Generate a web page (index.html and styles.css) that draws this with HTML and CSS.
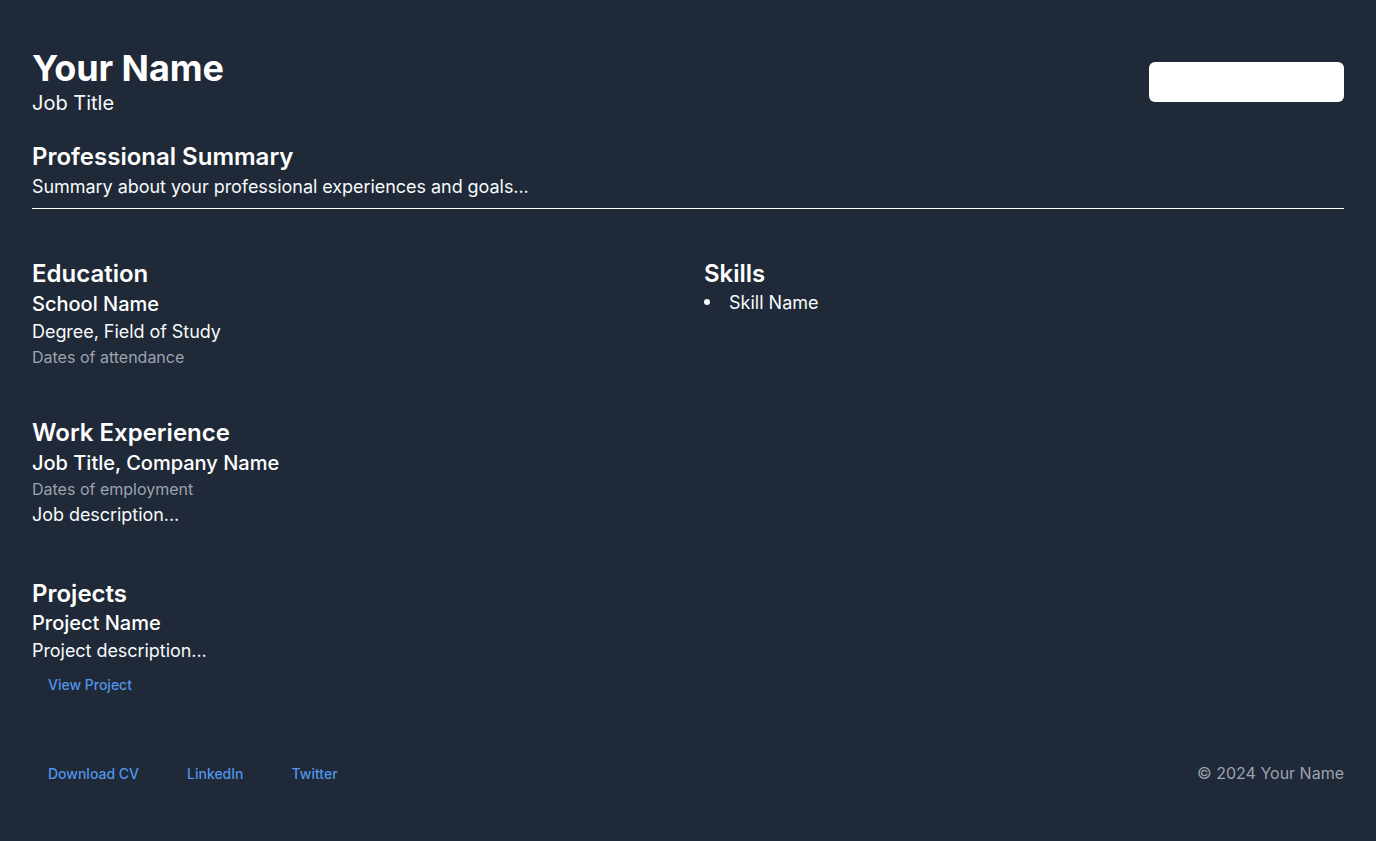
FILE: index.html
```html
<!DOCTYPE html>
<html lang="en">
<head>
<meta charset="utf-8">
<title>Your Name - Resume</title>
<link rel="stylesheet" href="styles.css">
</head>
<body>
<div class="page">
  <header class="top">
    <div class="identity">
      <h1 class="name">Your Name</h1>
      <p class="role">Job Title</p>
    </div>
    <div class="toggle-box"></div>
  </header>

  <section class="summary">
    <h2 class="heading">Professional Summary</h2>
    <p class="text">Summary about your professional experiences and goals...</p>
  </section>
  <hr class="rule">

  <div class="columns">
    <div class="col">
      <section class="block">
        <h2 class="heading">Education</h2>
        <h3 class="sub">School Name</h3>
        <p class="text">Degree, Field of Study</p>
        <p class="muted">Dates of attendance</p>
      </section>
      <section class="block">
        <h2 class="heading">Work Experience</h2>
        <h3 class="sub">Job Title, Company Name</h3>
        <p class="muted">Dates of employment</p>
        <p class="text">Job description...</p>
      </section>
      <section class="block block-projects">
        <h2 class="heading">Projects</h2>
        <h3 class="sub">Project Name</h3>
        <p class="text">Project description...</p>
        <a class="link-btn project-link" href="#">View Project</a>
      </section>
    </div>
    <div class="col">
      <section class="block">
        <h2 class="heading">Skills</h2>
        <ul class="skills">
          <li>Skill Name</li>
        </ul>
      </section>
    </div>
  </div>

  <footer class="foot">
    <nav class="foot-links">
      <a class="link-btn" href="#">Download CV</a>
      <a class="link-btn" href="#">LinkedIn</a>
      <a class="link-btn" href="#">Twitter</a>
    </nav>
    <p class="copy">© 2024 Your Name</p>
  </footer>
</div>
</body>
</html>
```

FILE: styles.css
```css
* { box-sizing: border-box; }

html, body {
  margin: 0;
  padding: 0;
  background: #1f2937;
}

body {
  font-family: Inter, "Noto Sans", "Liberation Sans", sans-serif;
  color: #f7fafc;
  min-height: 841px;
}

.page {
  padding: 47px 32px 36px;
}

h1, h2, h3, p, ul { margin: 0; }

.top {
  display: flex;
  justify-content: space-between;
  align-items: center;
}

.name {
  font-size: 36px;
  line-height: 1.2;
  font-weight: 700;
  color: #ffffff;
  letter-spacing: -0.1px;
}

.role {
  font-size: 20px;
  line-height: 1.2;
  color: #f7fafc;
  margin-top: 1px;
}

.toggle-box {
  width: 195px;
  height: 40px;
  background: #ffffff;
  border-radius: 6px;
  margin-top: 1px;
}

.summary {
  margin-top: 28px;
}

.summary .text {
  margin-top: 1px;
}

.heading {
  font-size: 24px;
  line-height: 1.2;
  font-weight: 600;
  color: #ffffff;
}

.text {
  font-size: 18px;
  line-height: 1.5;
  color: #f7fafc;
  letter-spacing: -0.05px;
}

.muted {
  font-size: 16px;
  line-height: 1.5;
  color: #9ca3af;
}

.sub {
  font-size: 20px;
  line-height: 1.2;
  font-weight: 500;
  color: #ffffff;
  margin-top: 3px;
  margin-bottom: 2px;
}

.rule {
  border: 0;
  border-top: 1px solid #ffffff;
  margin: 8px 0 0;
}

.columns {
  display: grid;
  grid-template-columns: 1fr 1fr;
  column-gap: 32px;
  margin-top: 51px;
}

.block + .block {
  margin-top: 50px;
}

.block + .block-projects {
  margin-top: 52px;
}

.link-btn {
  display: inline-flex;
  align-items: center;
  height: 32px;
  padding: 0 16px;
  font-size: 14px;
  font-weight: 500;
  color: #5294e8;
  text-decoration: none;
}

.project-link {
  margin-top: 4px;
}

.skills {
  list-style: none;
  padding: 0;
  margin-top: 0;
  font-size: 18px;
  line-height: 1.5;
}

.skills li {
  display: flex;
  align-items: center;
  gap: 19px;
}

.skills li::before {
  content: "";
  width: 6px;
  height: 6px;
  border-radius: 50%;
  background: #f7fafc;
}

.foot {
  display: flex;
  justify-content: space-between;
  align-items: center;
  margin-top: 57px;
}

.foot-links {
  display: flex;
  gap: 16px;
}

.copy {
  font-size: 16px;
  line-height: 1.5;
  color: #9ca3af;
}
```
